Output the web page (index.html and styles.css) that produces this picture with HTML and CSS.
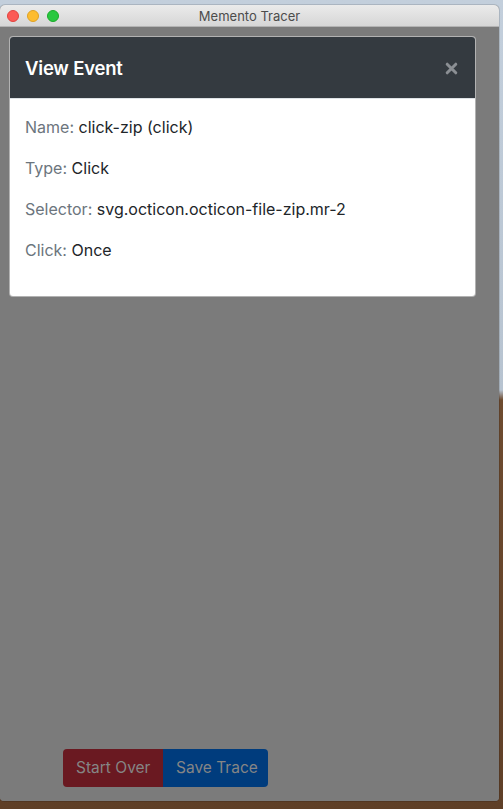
FILE: index.html
```html
<!DOCTYPE html>
<html>
<head>
<meta charset="utf-8">
<link rel="stylesheet" href="styles.css">
</head>
<body>
<div class="window">
  <div class="titlebar">
    <div class="lights">
      <span class="light red"></span>
      <span class="light yellow"></span>
      <span class="light green"></span>
    </div>
    <div class="title">Memento Tracer</div>
  </div>
  <div class="content">
    <div class="modal">
      <div class="modal-header">
        <h5 class="modal-title">View Event</h5>
        <svg class="close" width="13" height="13" viewBox="0 0 13 13"><path d="M2.2 2.2 L10.8 10.8 M10.8 2.2 L2.2 10.8" stroke="#8b8f94" stroke-width="3" stroke-linecap="round"/></svg>
      </div>
      <div class="modal-body">
        <p><span class="label">Name:</span> click-zip (click)</p>
        <p><span class="label">Type:</span> Click</p>
        <p><span class="label">Selector:</span> svg.octicon.octicon-file-zip.mr-2</p>
        <p><span class="label">Click:</span> Once</p>
      </div>
    </div>
    <div class="actions">
      <div class="btn-group">
        <span class="btn btn-red">Start Over</span><span class="btn btn-blue">Save Trace</span>
      </div>
    </div>
  </div>
</div>
</body>
</html>
```

FILE: styles.css
```css
* { box-sizing: border-box; }
html, body { margin: 0; padding: 0; }
body {
  width: 503px;
  height: 809px;
  overflow: hidden;
  background: linear-gradient(to bottom, #c3cfdc 0, #b7c3d0 390px, #6e4b2f 400px, #5f3f27 809px);
  font-family: Inter, "Noto Sans", sans-serif;
  padding-top: 5px;
}
.window {
  width: 499px;
  height: 796px;
  display: flex;
  flex-direction: column;
  border-radius: 5px 5px 4px 4px;
  overflow: hidden;
  background: #7b7b7b;
  box-shadow: 0 0 0 1px rgba(0,0,0,0.12);
}
.titlebar {
  height: 22px;
  flex: none;
  display: flex;
  align-items: center;
  background: linear-gradient(to bottom, #ebebeb, #d6d6d6);
  border-bottom: 1px solid #b3b3b3;
}
.lights {
  display: flex;
  gap: 8px;
  padding-left: 7px;
}
.light {
  width: 12px;
  height: 12px;
  border-radius: 50%;
  display: block;
}
.red { background: #fc5a55; border: 0.5px solid #e0443e; }
.yellow { background: #fdbc2f; border: 0.5px solid #dea123; }
.green { background: #29c840; border: 0.5px solid #1aab29; }
.title {
  flex: 1;
  text-align: center;
  font-size: 13px;
  color: #4c4c4c;
  margin-right: 59px;
}
.content {
  flex: 1;
  display: flex;
  flex-direction: column;
  padding: 9px 22px 0 9px;
  background: #7b7b7b;
}
.modal {
  width: 467px;
  background: #fff;
  border-radius: 4px;
  overflow: hidden;
  border: 1px solid rgba(0,0,0,0.3);
}
.modal-header {
  background: #343a40;
  height: 62px;
  display: flex;
  align-items: center;
  justify-content: space-between;
  padding: 0 17px 0 15px;
  border-bottom: 1px solid #dee2e6;
}
.modal-title {
  margin: 0;
  color: #fff;
  font-size: 18.5px;
  font-weight: 600;
  letter-spacing: -0.2px;
}
.close {
  display: block;
  margin-top: 2px;
}
.modal-body {
  padding: 16px 15px 17px;
}
.modal-body p {
  margin: 0 0 16px;
  font-size: 16px;
  line-height: 25px;
  color: #212529;
}
.label { color: #6c757d; }
.actions {
  margin-top: auto;
  padding: 0 0 14px 54px;
}
.btn-group { display: flex; }
.btn {
  display: block;
  white-space: nowrap;
  height: 38px;
  line-height: 36px;
  padding: 0 12px;
  font-size: 15.5px;
  color: #858585;
  border: 1px solid transparent;
}
.btn-red {
  background: #6a1921;
  border-radius: 4px 0 0 4px;
  width: 100px;
}
.btn-blue {
  background: #003c7d;
  border-radius: 0 4px 4px 0;
  width: 105px;
}
```
